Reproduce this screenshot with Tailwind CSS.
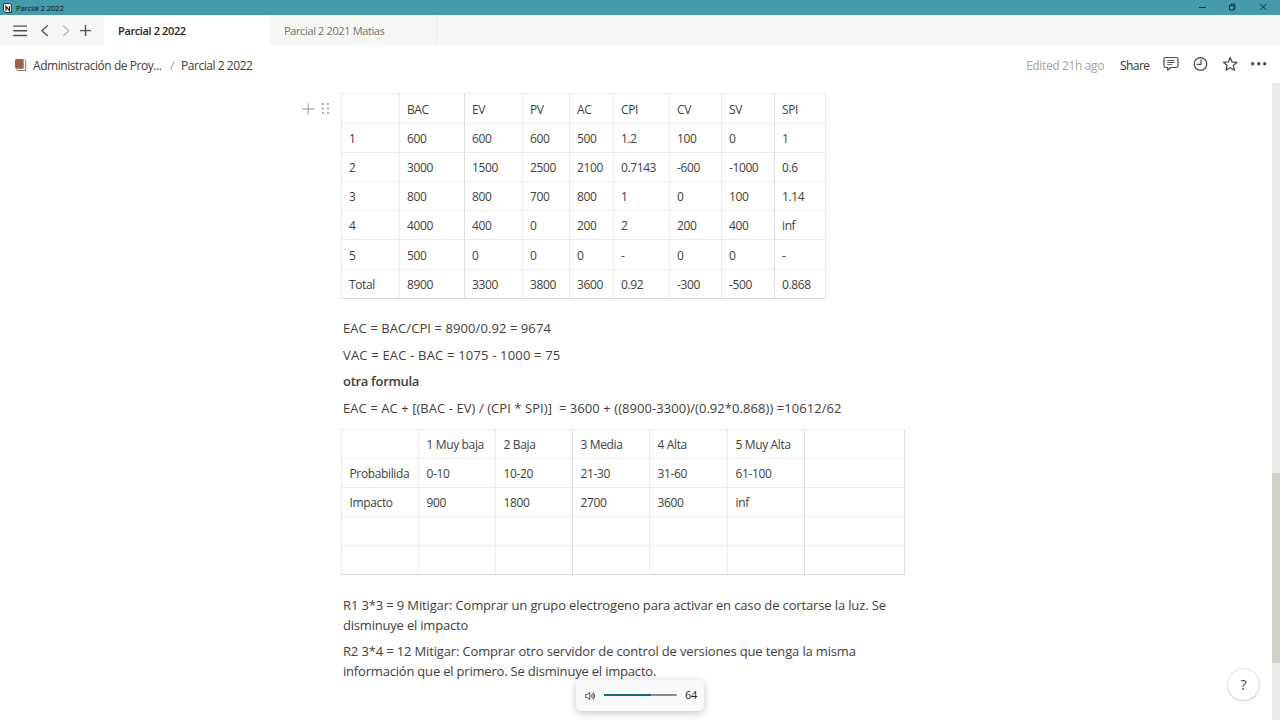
<!DOCTYPE html>
<html lang="es">
<head>
<meta charset="utf-8">
<title>Parcial 2 2022</title>
<script src="https://cdn.jsdelivr.net/npm/@tailwindcss/browser@4"></script>
</head>
<body class="w-[1280px] h-[720px] overflow-hidden bg-white font-['Open_Sans','Noto_Sans',sans-serif] text-[#42403b] flex flex-col relative">
  <header class="h-[15px] shrink-0 bg-[#459bab] flex items-center pl-[3px] text-[#101c20]">
    <svg class="w-[9px] h-[10px]" viewBox="0 0 9 10"><path d="M.5 .8 6.6.4 8.6 2v7.3L2.2 9.6.5 7.6z" fill="#f3f1ef" stroke="#222" stroke-width=".9"/><path d="M3 8V3.400l3.600 4.400V3.200" fill="none" stroke="#111" stroke-width="1.100"/></svg>
    <span class="ml-[4px] text-[8px] leading-[15px] tracking-[-0.3px]">Parcial 2 2022</span>
    <div class="ml-auto flex items-center w-[81px] h-full">
      <svg class="w-[81px] h-[15px]" viewBox="0 0 81 15" fill="none" stroke="#15343c"><path d="M0 7.500h7" stroke-width="1"/><path d="M30.500 5.500h4.500v4.500h-4.500zM32 5.500V4h4v4.500h-1.500" stroke-width="1"/><path d="M61.300 3.800l6.200 6.200M67.500 3.800l-6.200 6.200" stroke-width="1"/></svg>
    </div>
  </header>

  <nav class="h-[30px] shrink-0 bg-[#f7f7f5] flex text-[11px]">
    <svg class="w-[104px] h-[30px] shrink-0" viewBox="0 0 104 30" fill="none" stroke="#55534e" stroke-width="1.400"><path d="M13.300 11.100h13.700M13.300 15.800h13.700M13.300 20.500h13.700"/><path d="M47.600 10.500l-5.600 5.200 5.600 5.200"/><path d="M63.200 10.500l5.600 5.200-5.600 5.200" stroke="#b9b8b4"/><path d="M80 15.600h11M85.500 10.100v11"/></svg>
    <div class="w-[166px] bg-white pl-[14px] leading-[32px] font-semibold text-[#252422] whitespace-nowrap"><span class="tracking-[-0.38px]">Parcial 2 2022</span></div>
    <div class="w-[167px] border-r border-[#ececea] pl-[14px] leading-[32px] text-[#73726e] whitespace-nowrap"><span class="tracking-[-0.37px]">Parcial 2 2021 Matias</span></div>
  </nav>

  <div class="h-[38px] shrink-0 flex items-center text-[12px] leading-[38px] whitespace-nowrap pt-[3px] relative">
    <svg class="ml-[14px] w-[13px] h-[14px] shrink-0 -mt-[1px]" viewBox="0 0 13 14"><path d="M1.500 1h8.200v9.700H2.500L1 9.600V1.500z" fill="#9c6247"/><path d="M1.600 10.900l1.500 1.600h8.600V2.700l-1.200-.9" fill="none" stroke="#a5735c" stroke-width="1"/></svg>
    <span class="ml-[6px] w-[137px]"><span class="tracking-[-0.44px]">Administración de Proy...</span></span>
    <span class="w-[11px] text-[#a09f9b]">/</span>
    <span class="tracking-[-0.45px]">Parcial 2 2022</span>
    <span class="ml-auto w-[94px] text-[#a5a4a0]"><span class="tracking-[-0.36px]">Edited 21h ago</span></span>
    <span class="w-[40px] text-[#37352f]"><span class="tracking-[-0.55px]">Share</span></span>
    <svg class="w-[120px] h-[38px] shrink-0 -mt-[3px]" viewBox="0 0 120 38" fill="none" stroke="#4b4945" stroke-width="1.200" stroke-linejoin="round"><path d="M5.700 12.500h10.600q1.700 0 1.700 1.700v6.600q0 1.700-1.700 1.700h-5.600l-3 2.700v-2.700h-2q-1.700 0-1.700-1.700v-6.600q0-1.700 1.700-1.700z"/><path d="M7.200 15.400h7.600M7.200 17.500h7.600M7.200 19.600h5" stroke-width=".9"/><circle cx="40.500" cy="19" r="6.300"/><path d="M41 14.500v4.800h-4.200"/><path d="M70.200 12.400l1.900 4.500 4.900.4-3.700 3.200 1.100 4.800-4.200-2.600-4.200 2.600 1.100-4.800-3.700-3.200 4.900-.4z"/><g fill="#4b4945" stroke="none"><circle cx="92.700" cy="18.800" r="1.700"/><circle cx="98.700" cy="18.800" r="1.700"/><circle cx="104.700" cy="18.800" r="1.700"/></g></svg>
  </div>

  <div class="flex flex-1 min-h-0">
    <main class="w-[1272px] overflow-hidden flex pt-[10px]">
      <div class="w-[341px] shrink-0"><svg class="ml-[300px] w-[34px] h-[30px]" viewBox="0 0 34 30"><path d="M2.500 16h11.500M8.200 10.300v11.500" stroke="#b0afab" stroke-width="1.300"/><g fill="#b0afab"><rect x="22" y="10" width="2" height="2"/><rect x="27" y="10" width="2" height="2"/><rect x="22" y="14.500" width="2" height="2"/><rect x="27" y="14.500" width="2" height="2"/><rect x="22" y="19" width="2" height="2"/><rect x="27" y="19" width="2" height="2"/></g></svg></div>
      <div class="w-[570px]">
        <div class="w-[485px] grid grid-cols-[58px_65px_58px_47px_44px_56px_52px_53px_51px] grid-rows-[30px_29px_29px_29px_29px_30px_29px] border-l border-t border-[#ebebea] text-[12px] leading-[30px] tracking-[-0.4px] whitespace-nowrap [&>div]:border-r [&>div]:border-b [&>div]:border-[#ebebea] [&>div]:pl-[7px] [&>div:nth-child(-n+9)]:leading-[31px] [&>div:nth-child(n+46):nth-child(-n+54)]:leading-[31px] [&>div:nth-child(9n+2)]:border-r-[#dcdcda] [&>div:nth-child(9n+8)]:border-r-[#dcdcda] [&>div:nth-child(n+55)]:border-b-[#dcdcda]">
          <div></div><div>BAC</div><div>EV</div><div>PV</div><div>AC</div><div>CPI</div><div>CV</div><div>SV</div><div>SPI</div>
          <div>1</div><div>600</div><div>600</div><div>600</div><div>500</div><div>1.2</div><div>100</div><div>0</div><div>1</div>
          <div>2</div><div>3000</div><div>1500</div><div>2500</div><div>2100</div><div>0.7143</div><div>-600</div><div>-1000</div><div>0.6</div>
          <div>3</div><div>800</div><div>800</div><div>700</div><div>800</div><div>1</div><div>0</div><div>100</div><div>1.14</div>
          <div>4</div><div>4000</div><div>400</div><div>0</div><div>200</div><div>2</div><div>200</div><div>400</div><div>inf</div>
          <div>5</div><div>500</div><div>0</div><div>0</div><div>0</div><div>-</div><div>0</div><div>0</div><div>-</div>
          <div>Total</div><div>8900</div><div>3300</div><div>3800</div><div>3600</div><div>0.92</div><div>-300</div><div>-500</div><div>0.868</div>
        </div>

        <div class="mt-[16px] pl-[2px] h-[114px] text-[13px] leading-[26.700px] whitespace-nowrap">
          <p><span class="tracking-[0.08px]">EAC = BAC/CPI = 8900/0.92 = 9674</span></p>
          <p><span class="tracking-[0.18px]">VAC = EAC - BAC = 1075 - 1000 = 75</span></p>
          <p class="font-semibold"><span class="tracking-[-0.3px]">otra formula</span></p>
          <p><span class="tracking-[0.065px]">EAC = AC + [(BAC - EV) / (CPI * SPI)]&nbsp; = 3600 + ((8900-3300)/(0.92*0.868)) =10612/62</span></p>
        </div>

        <div class="w-[564px] grid grid-cols-[77px_77px_77px_77px_78px_77px_100px] auto-rows-[29px] border-l border-t border-[#ebebea] text-[12px] leading-[29px] tracking-[-0.36px] whitespace-nowrap [&>div]:border-r [&>div]:border-b [&>div]:border-[#ebebea] [&>div]:pl-[7.500px] [&>div:nth-child(7n+3)]:border-r-[#dcdcda] [&>div:nth-child(7n+6)]:border-r-[#dcdcda] [&>div:nth-child(7n)]:border-r-[#dcdcda] [&>div:nth-child(n+29)]:border-b-[#dcdcda]">
          <div></div><div>1 Muy baja</div><div>2 Baja</div><div>3 Media</div><div>4 Alta</div><div>5 Muy Alta</div><div></div>
          <div>Probabilida</div><div>0-10</div><div>10-20</div><div>21-30</div><div>31-60</div><div>61-100</div><div></div>
          <div>Impacto</div><div>900</div><div>1800</div><div>2700</div><div>3600</div><div>inf</div><div></div>
          <div></div><div></div><div></div><div></div><div></div><div></div><div></div>
          <div></div><div></div><div></div><div></div><div></div><div></div><div></div>
        </div>

        <div class="mt-[20px] pl-[2px] text-[13px] leading-[20px] whitespace-nowrap">
          <p><span class="tracking-[-0.137px]">R1 3*3 = 9 Mitigar: Comprar un grupo electrogeno para activar en caso de cortarse la luz. Se</span><br><span class="tracking-[-0.2px]">disminuye el impacto</span></p>
          <p class="mt-[6px]"><span class="tracking-[-0.15px]">R2 3*4 = 12 Mitigar: Comprar otro servidor de control de versiones que tenga la misma</span><br><span class="tracking-[-0.195px]">información que el primero. Se disminuye el impacto.</span></p>
        </div>
      </div>
    </main>
    <aside class="w-[8px] bg-[#edeae8] pt-[390px]"><div class="h-[190px] bg-[#d3d0cc]"></div></aside>
  </div>

  <div class="absolute left-[576px] top-[680px] w-[128px] h-[31px] rounded-[5px] bg-[#fafafa] shadow-[0_2px_8px_rgba(0,0,0,0.22)] flex items-center pl-[9px]">
    <svg class="w-[10px] h-[10px]" viewBox="0 0 10 10" fill="none" stroke="#333" stroke-width=".8"><path d="M.6 3.500h1.700L4.700 1.200v7.600L2.300 6.500H.6z"/><path d="M6 3.500q1 1.500 0 3M7.300 2.300q2 2.700 0 5.400M8.500 1.300q2.300 3.700 0 7.400"/></svg>
    <div class="ml-[9px] -mt-[2px] w-[73px] h-[2px] rounded bg-[#8b8b8b]"><div class="w-[47px] h-[2px] bg-[#1c6a78]"></div></div>
    <span class="ml-[8px] text-[11px] text-[#222] tracking-[-0.2px]">64</span>
  </div>
  <div class="absolute left-[1228px] top-[669px] w-[31px] h-[31px] rounded-full bg-white shadow-[0_0_0_1px_rgba(0,0,0,0.08),0_1px_3px_rgba(0,0,0,0.15)] flex items-center justify-center text-[14px] font-medium">?</div>
</body>
</html>
